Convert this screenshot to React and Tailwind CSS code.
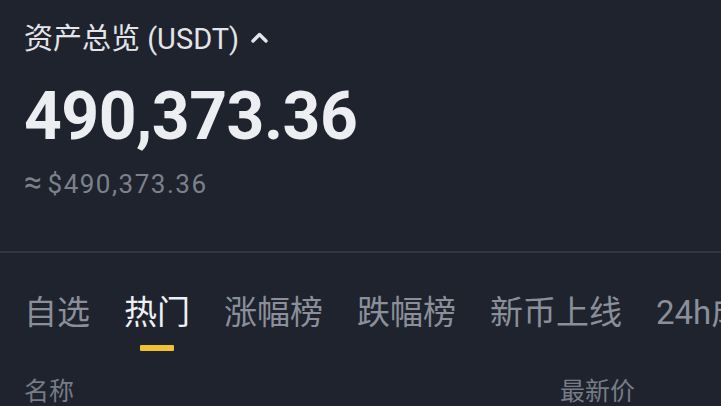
export default function App() {
  const tabs = ["自选", "热门", "涨幅榜", "跌幅榜", "新币上线", "24h成交额"];
  return (
    <div
      className="w-[721px] h-[406px] overflow-hidden bg-[#1f232e]"
      style={{ fontFamily: 'Roboto, "Noto Sans CJK SC", sans-serif' }}
    >
      <div className="px-6">
        <div className="mt-[25px] h-[29px] flex items-center text-[29px] leading-[29px] text-[#e3e5e8]">
          <span>资产总览 (USDT)</span>
          <svg className="ml-[12px] mt-[-4px]" width="17" height="11" viewBox="0 0 17 11">
            <polyline points="2,9 8.5,2.5 15,9" fill="none" stroke="#e3e5e8" strokeWidth="3.4" strokeLinecap="round" strokeLinejoin="round" />
          </svg>
        </div>
        <div className="mt-[30px] h-[66px] text-[66px] leading-none font-bold text-[#eceef1] tracking-[-0.5px]">
          490,373.36
        </div>
        <div className="mt-[16px] h-[30px] flex items-baseline text-[26px] leading-none text-[#7c818c] tracking-[1.5px]">
          <span className="text-[32px] leading-none mr-[4px]">≈</span>
          <span>$490,373.36</span>
        </div>
      </div>
      <div className="mt-[55px] h-[2px] bg-[#313643]" />
      <div className="pl-6 mt-[43px] flex gap-[34px] whitespace-nowrap">
        {tabs.map((t) => (
          <div key={t} className="flex flex-col items-center shrink-0">
            <div
              className={
                "h-[33px] text-[33px] leading-[33px] " +
                (t === "热门" ? "text-[#eef0f3]" : "text-[#8a8f9a]")
              }
            >
              {t}
            </div>
            {t === "热门" ? (
              <div className="mt-[16px] w-[34px] h-[6px] rounded-[1px] bg-[#f0c132]" />
            ) : null}
          </div>
        ))}
      </div>
      <div className="pl-6 mt-[28px] flex text-[25px] leading-[25px] text-[#767b86] whitespace-nowrap">
        <div className="w-[536px]">名称</div>
        <div>最新价</div>
      </div>
    </div>
  );
}
